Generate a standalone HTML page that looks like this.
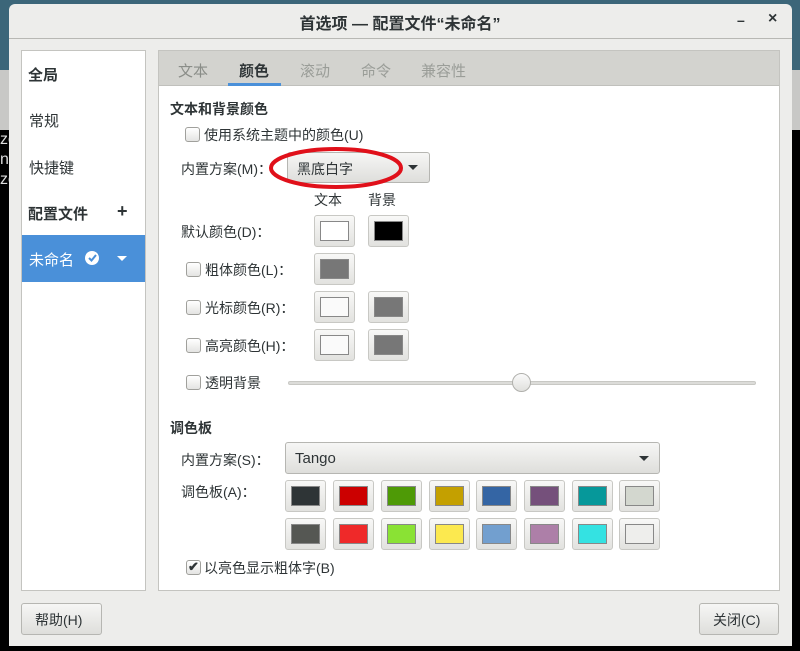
<!DOCTYPE html>
<html><head><meta charset="utf-8"><style>
*{box-sizing:border-box;margin:0;padding:0}
body{width:800px;height:651px;overflow:hidden;background:#000;position:relative;font-family:"Liberation Sans","Noto Sans CJK SC",sans-serif;font-size:14px;color:#2e3436}
.a{position:absolute}
.win{left:9px;top:4px;width:783px;height:642px;background:#ededeb;border-radius:6px 6px 0 0}
.cb{width:15px;height:15px;border:1px solid #a0a09c;border-radius:3px;background:linear-gradient(#fff,#e4e4e2)}
.sw{width:41px;height:32px;border:1px solid #c8c8c4;border-radius:3px;background:linear-gradient(#f8f8f7,#e2e2df);padding:5px}
.sw i{display:block;width:100%;height:100%;border:1px solid #888}
.btn{border:1px solid #b6b6b2;border-radius:3px;background:linear-gradient(#f6f6f5,#dededb)}
.lab{font-size:14px}
</style></head><body>
<div class="a" style="left:0;top:0;width:800px;height:70px;background:#3c6679"></div>
<div class="a" style="left:0;top:70px;width:12px;height:60px;background:#c8c8c6"></div>
<div class="a" style="left:0;top:130px;width:12px;height:60px;color:#ddd;font-size:16px;line-height:20px">zg<br>ne<br>zg</div>
<div class="a" style="left:788px;top:70px;width:12px;height:60px;background:#c8c8c6"></div>
<div class="a win"></div>
<div class="a" style="left:9px;top:38px;width:783px;height:1px;background:#b8b8b4"></div>
<div class="a" style="left:0;top:10px;width:800px;text-align:center;font-size:16px;font-weight:bold;color:#2e3436">首选项 — 配置文件“未命名”</div>
<div class="a" style="left:737px;top:12px;font-weight:bold;font-size:14px">–</div>
<div class="a" style="left:768px;top:10px;font-weight:bold;font-size:16px">×</div>
<!-- sidebar -->
<div class="a" style="left:21px;top:50px;width:125px;height:541px;background:#fff;border:1px solid #c4c4c0"></div>
<div class="a" style="left:28px;top:64px;font-weight:bold;font-size:15px">全局</div>
<div class="a" style="left:29px;top:110px;font-size:15px">常规</div>
<div class="a" style="left:29px;top:157px;font-size:15px">快捷键</div>
<div class="a" style="left:28px;top:203px;font-weight:bold;font-size:15px">配置文件</div>
<div class="a" style="left:117px;top:201px;font-weight:bold;font-size:18px">+</div>
<div class="a" style="left:22px;top:235px;width:123px;height:47px;background:#4a90d9"></div>
<div class="a" style="left:29px;top:249px;font-size:15px;color:#fff">未命名</div>
<div class="a" style="left:85px;top:251px;width:14px;height:14px;border-radius:50%;background:#fff"></div>
<svg class="a" style="left:85px;top:251px" width="14" height="14"><path d="M4 7l2.5 2.5L11 4" stroke="#4a90d9" stroke-width="2" fill="none"/></svg>
<div class="a" style="left:117px;top:256px;border:5px solid transparent;border-top-color:#fff"></div>
<!-- notebook -->
<div class="a" style="left:158px;top:50px;width:622px;height:541px;background:#fff;border:1px solid #c4c4c0"></div>
<div class="a" style="left:159px;top:51px;width:620px;height:35px;background:#d3d3cf;border-bottom:1px solid #c0c0bc"></div>
<div class="a" style="left:178px;top:60px;font-size:15px;color:#8a8d88">文本</div>
<div class="a" style="left:239px;top:60px;font-size:15px;font-weight:bold">颜色</div>
<div class="a" style="left:228px;top:83px;width:53px;height:3px;background:#4a90d9"></div>
<div class="a" style="left:300px;top:60px;font-size:15px;color:#9a9d98">滚动</div>
<div class="a" style="left:361px;top:60px;font-size:15px;color:#9a9d98">命令</div>
<div class="a" style="left:421px;top:60px;font-size:15px;color:#9a9d98">兼容性</div>
<div class="a" style="left:170px;top:99px;font-weight:bold;font-size:14px">文本和背景颜色</div>
<div class="a cb" style="left:185px;top:127px"></div>
<div class="a lab" style="left:204px;top:125px">使用系统主题中的颜色(U)</div>
<div class="a lab" style="left:181px;top:159px">内置方案(M)：</div>
<div class="a btn" style="left:287px;top:152px;width:143px;height:31px"></div>
<div class="a lab" style="left:297px;top:159px">黑底白字</div>
<div class="a" style="left:408px;top:165px;border:5px solid transparent;border-top-color:#2e3436"></div>
<svg class="a" style="left:268px;top:146px" width="140" height="46"><ellipse cx="68" cy="22" rx="65" ry="19" fill="none" stroke="#e0101a" stroke-width="4"/></svg>
<div class="a lab" style="left:314px;top:190px">文本</div>
<div class="a lab" style="left:368px;top:190px">背景</div>
<div class="a lab" style="left:181px;top:222px">默认颜色(D)：</div>
<div class="a sw" style="left:314px;top:215px"><i style="background:#fff"></i></div>
<div class="a sw" style="left:368px;top:215px"><i style="background:#000"></i></div>
<div class="a cb" style="left:186px;top:262px"></div>
<div class="a lab" style="left:205px;top:260px">粗体颜色(L)：</div>
<div class="a sw" style="left:314px;top:253px"><i style="background:#777"></i></div>
<div class="a cb" style="left:186px;top:300px"></div>
<div class="a lab" style="left:205px;top:298px">光标颜色(R)：</div>
<div class="a sw" style="left:314px;top:291px"><i style="background:#fafafa"></i></div>
<div class="a sw" style="left:368px;top:291px"><i style="background:#777"></i></div>
<div class="a cb" style="left:186px;top:338px"></div>
<div class="a lab" style="left:205px;top:336px">高亮颜色(H)：</div>
<div class="a sw" style="left:314px;top:329px"><i style="background:#fafafa"></i></div>
<div class="a sw" style="left:368px;top:329px"><i style="background:#777"></i></div>
<div class="a cb" style="left:186px;top:375px"></div>
<div class="a lab" style="left:205px;top:373px">透明背景</div>
<div class="a" style="left:288px;top:381px;width:468px;height:4px;border-radius:2px;background:#dcdcd9;border:1px solid #c8c8c4"></div>
<div class="a" style="left:512px;top:373px;width:19px;height:19px;border-radius:50%;background:linear-gradient(#fafafa,#e0e0dd);border:1px solid #b0b0ac"></div>
<div class="a" style="left:170px;top:418px;font-weight:bold;font-size:14px">调色板</div>
<div class="a lab" style="left:181px;top:450px">内置方案(S)：</div>
<div class="a btn" style="left:285px;top:442px;width:375px;height:32px"></div>
<div class="a lab" style="left:295px;top:450px;font-size:15px">Tango</div>
<div class="a" style="left:639px;top:456px;border:5px solid transparent;border-top-color:#2e3436"></div>
<div class="a lab" style="left:181px;top:482px">调色板(A)：</div>
<div id="pal"></div>
<div class="a cb" style="left:186px;top:560px;font-size:13px;line-height:12px;text-align:center;font-weight:bold">✔</div>
<div class="a lab" style="left:204px;top:558px">以亮色显示粗体字(B)</div>
<div class="a btn" style="left:21px;top:603px;width:81px;height:32px"></div>
<div class="a lab" style="left:35px;top:610px">帮助(H)</div>
<div class="a btn" style="left:699px;top:603px;width:80px;height:32px"></div>
<div class="a lab" style="left:713px;top:610px">关闭(C)</div>
<div class="a sw" style="left:285px;top:480px"><i style="background:#2e3436"></i></div>
<div class="a sw" style="left:333px;top:480px"><i style="background:#cc0000"></i></div>
<div class="a sw" style="left:381px;top:480px"><i style="background:#4e9a06"></i></div>
<div class="a sw" style="left:429px;top:480px"><i style="background:#c4a000"></i></div>
<div class="a sw" style="left:476px;top:480px"><i style="background:#3465a4"></i></div>
<div class="a sw" style="left:524px;top:480px"><i style="background:#75507b"></i></div>
<div class="a sw" style="left:572px;top:480px"><i style="background:#06989a"></i></div>
<div class="a sw" style="left:619px;top:480px"><i style="background:#d3d7cf"></i></div>
<div class="a sw" style="left:285px;top:518px"><i style="background:#555753"></i></div>
<div class="a sw" style="left:333px;top:518px"><i style="background:#ef2929"></i></div>
<div class="a sw" style="left:381px;top:518px"><i style="background:#8ae234"></i></div>
<div class="a sw" style="left:429px;top:518px"><i style="background:#fce94f"></i></div>
<div class="a sw" style="left:476px;top:518px"><i style="background:#729fcf"></i></div>
<div class="a sw" style="left:524px;top:518px"><i style="background:#ad7fa8"></i></div>
<div class="a sw" style="left:572px;top:518px"><i style="background:#34e2e2"></i></div>
<div class="a sw" style="left:619px;top:518px"><i style="background:#eeeeec"></i></div>
</body></html>
